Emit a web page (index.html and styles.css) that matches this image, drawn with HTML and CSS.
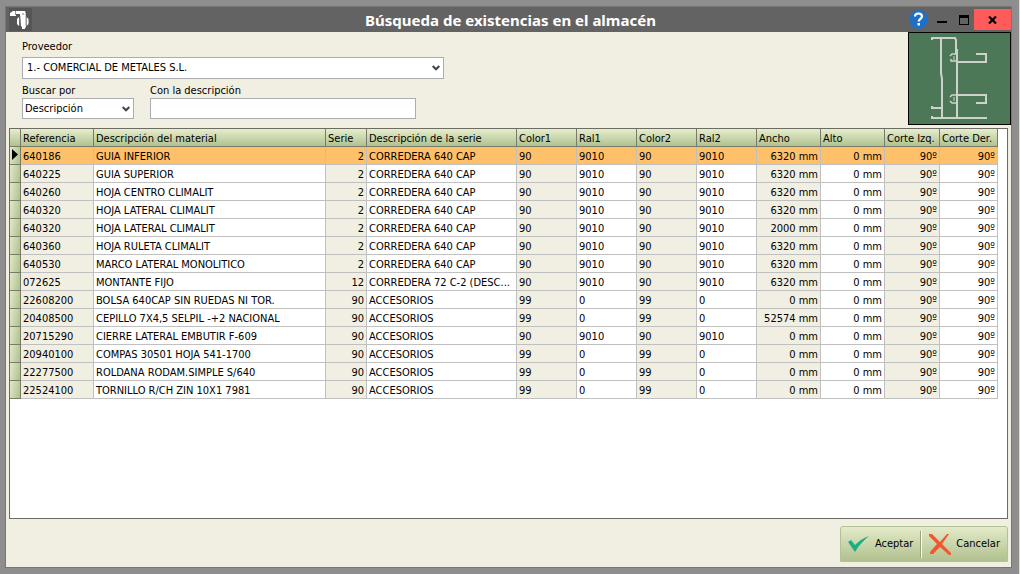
FILE: index.html
```
<!DOCTYPE html>
<html lang="es">
<head>
<meta charset="utf-8">
<title>Búsqueda de existencias en el almacén</title>
<link rel="stylesheet" href="styles.css">
</head>
<body>
<main class="window">
  <header class="titlebar">
    <svg class="logo" width="23" height="23" viewBox="0 0 23 23" aria-hidden="true">
      <rect width="23" height="23" fill="#555"/>
      <path d="M1 7V5l3-2h12l1 3H7v2H1z" fill="#fff"/>
      <path d="M11 6V3h3l2 2 1 3v11l-1 1v1h-3v-2l-1-1z" fill="#fff"/>
      <path d="M10 9l-2 2v5l2 2zM17.500 9l2 2v5l-2 2z" fill="#fff"/>
      <path d="M6.500 3v4M10.700 8v10M17 8v10" stroke="#777" stroke-width=".8" fill="none"/>
      <circle cx="14" cy="6" r=".7" fill="#555"/>
    </svg>
    <h1 class="title">Búsqueda de existencias en el almacén</h1>
    <div class="controls">
      <button class="control help" type="button" aria-label="Ayuda">
        <svg width="19" height="19" viewBox="0 0 19 19"><circle cx="9.500" cy="9.500" r="9.500" fill="#1f6fc4"/><path d="M6 6.500C6 4.500 7.500 3.500 9.500 3.500s3.500 1 3.500 3-3.300 2.700-3.300 5" fill="none" stroke="#fff" stroke-width="2.200"/><rect x="8.500" y="13" width="2.500" height="2.500" fill="#fff"/></svg>
      </button>
      <button class="control" type="button" aria-label="Minimizar">
        <svg width="10" height="8" viewBox="0 0 10 8"><path d="M0 5h10v2H0z"/></svg>
      </button>
      <button class="control" type="button" aria-label="Maximizar">
        <svg width="10" height="10" viewBox="0 0 10 10"><path d="M0 0h10v10H0zM1 3v6h8V3z" fill-rule="evenodd"/></svg>
      </button>
      <button class="control close" type="button" aria-label="Cerrar">
        <svg width="9" height="8" viewBox="0 0 9 8"><path d="M1 0.500l7 7M8 .5l-7 7" stroke="#000" stroke-width="2.200"/></svg>
      </button>
    </div>
  </header>

  <section class="search">
    <form class="fields">
      <div class="field provider">
        <label for="proveedor">Proveedor</label>
        <div class="picker">
          <select id="proveedor" class="box wide"><option>1.- COMERCIAL DE METALES S.L.</option></select>
          <svg class="chevron" width="8" height="6" viewBox="0 0 8 6"><path d="M.7 1L4 4.300 7.300 1" fill="none" stroke="#444" stroke-width="2"/></svg>
        </div>
      </div>
      <div class="filters">
        <div class="field by">
          <label for="buscar">Buscar por</label>
          <div class="picker">
            <select id="buscar" class="box"><option>Descripción</option></select>
            <svg class="chevron" width="8" height="6" viewBox="0 0 8 6"><path d="M.7 1L4 4.300 7.300 1" fill="none" stroke="#444" stroke-width="2"/></svg>
          </div>
        </div>
        <div class="field text">
          <label for="descripcion">Con la descripción</label>
          <input id="descripcion" class="box" type="text">
        </div>
      </div>
    </form>
    <svg class="profile" width="103" height="93" viewBox="0 0 103 93" role="img" aria-label="Perfil">
      <rect x=".5" y=".5" width="102" height="92" fill="#4d7858" stroke="#000"/>
      <g fill="none" stroke="#cdd3ca" stroke-width="2">
        <path d="M24 8V6h23l1 2v14M33 7v34l1 6v39M49 17v69M24 74v2h10M24 84v2h55"/>
        <path d="M49 30h29V22H68M49 63h29v8H68"/>
        <path d="M48 22h-4l-2 2M43 27v2h5M48 63h-4l-2 2M42 69l2 2h4" stroke-width="1.500"/>
        <path d="M46 24v4M46 65v4" stroke-width="1"/>
      </g>
    </svg>
  </section>

  <section class="grid">
    <table class="stock">
      <colgroup><col class="c-mark"><col class="c-ref"><col class="c-mat"><col class="c-serie"><col class="c-desc"><col class="c-color"><col class="c-color"><col class="c-color"><col class="c-color"><col class="c-size"><col class="c-size"><col class="c-izq"><col class="c-der"></colgroup>
      <thead><tr><th></th><th>Referencia</th><th>Descripción del material</th><th>Serie</th><th>Descripción de la serie</th><th>Color1</th><th>Ral1</th><th>Color2</th><th>Ral2</th><th>Ancho</th><th>Alto</th><th>Corte Izq.</th><th>Corte Der.</th></tr></thead>
      <tbody>
        <tr class="selected"><th><svg class="marker" width="6" height="11" viewBox="0 0 6 11"><path d="M0 0l6 5.500L0 11z"/></svg></th><td>640186</td><td>GUIA INFERIOR</td><td>2</td><td>CORREDERA 640 CAP</td><td>90</td><td>9010</td><td>90</td><td>9010</td><td>6320 mm</td><td>0 mm</td><td>90º</td><td>90º</td></tr>
        <tr><th></th><td>640225</td><td>GUIA SUPERIOR</td><td>2</td><td>CORREDERA 640 CAP</td><td>90</td><td>9010</td><td>90</td><td>9010</td><td>6320 mm</td><td>0 mm</td><td>90º</td><td>90º</td></tr>
        <tr><th></th><td>640260</td><td>HOJA CENTRO CLIMALIT</td><td>2</td><td>CORREDERA 640 CAP</td><td>90</td><td>9010</td><td>90</td><td>9010</td><td>6320 mm</td><td>0 mm</td><td>90º</td><td>90º</td></tr>
        <tr><th></th><td>640320</td><td>HOJA LATERAL CLIMALIT</td><td>2</td><td>CORREDERA 640 CAP</td><td>90</td><td>9010</td><td>90</td><td>9010</td><td>6320 mm</td><td>0 mm</td><td>90º</td><td>90º</td></tr>
        <tr><th></th><td>640320</td><td>HOJA LATERAL CLIMALIT</td><td>2</td><td>CORREDERA 640 CAP</td><td>90</td><td>9010</td><td>90</td><td>9010</td><td>2000 mm</td><td>0 mm</td><td>90º</td><td>90º</td></tr>
        <tr><th></th><td>640360</td><td>HOJA RULETA CLIMALIT</td><td>2</td><td>CORREDERA 640 CAP</td><td>90</td><td>9010</td><td>90</td><td>9010</td><td>6320 mm</td><td>0 mm</td><td>90º</td><td>90º</td></tr>
        <tr><th></th><td>640530</td><td>MARCO LATERAL MONOLITICO</td><td>2</td><td>CORREDERA 640 CAP</td><td>90</td><td>9010</td><td>90</td><td>9010</td><td>6320 mm</td><td>0 mm</td><td>90º</td><td>90º</td></tr>
        <tr><th></th><td>072625</td><td>MONTANTE FIJO</td><td>12</td><td>CORREDERA 72 C-2 (DESC...</td><td>90</td><td>9010</td><td>90</td><td>9010</td><td>6320 mm</td><td>0 mm</td><td>90º</td><td>90º</td></tr>
        <tr><th></th><td>22608200</td><td>BOLSA 640CAP SIN RUEDAS NI TOR.</td><td>90</td><td>ACCESORIOS</td><td>99</td><td>0</td><td>99</td><td>0</td><td>0 mm</td><td>0 mm</td><td>90º</td><td>90º</td></tr>
        <tr><th></th><td>20408500</td><td>CEPILLO 7X4,5 SELPIL -+2 NACIONAL</td><td>90</td><td>ACCESORIOS</td><td>99</td><td>0</td><td>99</td><td>0</td><td>52574 mm</td><td>0 mm</td><td>90º</td><td>90º</td></tr>
        <tr><th></th><td>20715290</td><td>CIERRE LATERAL EMBUTIR F-609</td><td>90</td><td>ACCESORIOS</td><td>90</td><td>9010</td><td>90</td><td>9010</td><td>0 mm</td><td>0 mm</td><td>90º</td><td>90º</td></tr>
        <tr><th></th><td>20940100</td><td>COMPAS 30501 HOJA 541-1700</td><td>90</td><td>ACCESORIOS</td><td>99</td><td>0</td><td>99</td><td>0</td><td>0 mm</td><td>0 mm</td><td>90º</td><td>90º</td></tr>
        <tr><th></th><td>22277500</td><td>ROLDANA RODAM.SIMPLE S/640</td><td>90</td><td>ACCESORIOS</td><td>99</td><td>0</td><td>99</td><td>0</td><td>0 mm</td><td>0 mm</td><td>90º</td><td>90º</td></tr>
        <tr><th></th><td>22524100</td><td>TORNILLO R/CH ZIN 10X1 7981</td><td>90</td><td>ACCESORIOS</td><td>99</td><td>0</td><td>99</td><td>0</td><td>0 mm</td><td>0 mm</td><td>90º</td><td>90º</td></tr>
      </tbody>
    </table>
  </section>

  <footer class="actions">
    <div class="toolbar">
      <button class="action" type="button">
        <svg width="22" height="16" viewBox="0 0 22 16"><path d="M0 6l3-2 4 5C11 5 15 2 21 0 16 4 11 9 7 16z" fill="#1fae84"/></svg>
        Aceptar
      </button>
      <span class="divider"></span>
      <button class="action" type="button">
        <svg width="22" height="21" viewBox="0 0 22 21"><path d="M0 0h3l8 8 7-8h2l-7 10 9 9v2h-2l-9-8-7 7H1v-2l7-8-8-8z" fill="#f4562f"/></svg>
        Cancelar
      </button>
    </div>
  </footer>
</main>
</body>
</html>
```
FILE: styles.css
```
* { box-sizing: border-box; }

body {
  margin: 0;
  min-height: 100vh;
  display: flex;
  padding: 6px 7px 6px 5px;
  border-right: 1px solid #dcdccb;
  background: #8e8e8e;
  color: #000;
  font: 11px/14px Tahoma, "DejaVu Sans Condensed", "DejaVu Sans", sans-serif;
}

button, select, input { font: inherit; color: inherit; }

.window {
  flex: 1;
  min-width: 0;
  display: flex;
  flex-direction: column;
  border: 1px solid #777770;
  background: #f1efe2;
}

.titlebar {
  display: flex;
  align-items: center;
  height: 25px;
  padding-left: 3px;
  background: #636363;
}

.logo { flex: none; }

.title {
  flex: 1;
  margin: 0;
  padding-left: 80px;
  color: #fff;
  font-family: "Noto Sans", "Open Sans", sans-serif;
  font-size: 15px;
  line-height: 24px;
  text-align: center;
}

.controls {
  display: flex;
  align-items: center;
  gap: 12px;
}

.control {
  display: flex;
  align-items: center;
  justify-content: center;
  padding: 0;
  border: 0;
  background: none;
}

.help { margin-right: -3px; }

.close {
  width: 37px;
  height: 21px;
  margin-left: -7px;
  background: #ff5b5b;
}

.search {
  display: flex;
  justify-content: space-between;
  align-items: flex-start;
}

.fields {
  flex: 1;
  padding: 8px 16px 0;
}

.field {
  display: flex;
  flex-direction: column;
}

.provider {
  max-width: 422px;
  gap: 3px;
}

.filters {
  display: flex;
  gap: 16px;
  max-width: 394px;
  margin-top: 5px;
}

.by { width: 112px; }

.text { flex: 1; }

.picker {
  position: relative;
  display: flex;
}

.box {
  appearance: none;
  width: 100%;
  height: 21px;
  margin: 0;
  padding: 0 2px;
  border: 1px solid #abadb3;
  border-radius: 0;
  background: #fff;
}

.wide {
  height: 22px;
  padding: 0 4px;
}

.chevron {
  position: absolute;
  right: 4px;
  top: 8px;
  pointer-events: none;
}

.profile {
  flex: none;
  display: block;
}

.grid {
  flex: 1;
  margin: 3px 3px 0;
  border: 1px solid #6c6c64;
  background: #fff;
}

.stock {
  width: 988px;
  border-collapse: separate;
  border-spacing: 0;
  table-layout: fixed;
}

.c-mark { width: 11px; }
.c-ref { width: 73px; }
.c-mat { width: 232px; }
.c-serie { width: 41px; }
.c-desc { width: 150px; }
.c-color { width: 60px; }
.c-size { width: 64px; }
.c-izq { width: 55px; }
.c-der { width: 58px; }

.stock th,
.stock td {
  height: 18px;
  padding: 3px 2px 0;
  overflow: hidden;
  border: solid #c0c0c0;
  border-width: 0 1px 1px 0;
  font-weight: normal;
  text-align: left;
  white-space: nowrap;
}

.stock th {
  border-color: #777b68;
  background: linear-gradient(#e6edcc, #b0c290);
}

.stock tbody th {
  padding: 0 2px 3px;
  background: linear-gradient(100deg, #e2eac8, #aec08e);
}

.stock td:nth-child(even) { background: #f1efe2; }

.stock td:nth-child(4),
.stock td:nth-child(n+10) { text-align: right; }

.stock .selected td:nth-child(n) { background: #ffc06a; }

.marker { display: block; }

.actions {
  display: flex;
  justify-content: flex-end;
  padding: 7px 3px 5px;
}

.toolbar {
  display: flex;
  align-items: center;
  height: 36px;
  border: 1px solid #b3c293;
  border-radius: 3px 3px 0 0;
  background: linear-gradient(#e3eac8, #b0c18e);
}

.action {
  display: flex;
  align-items: center;
  gap: 5px;
  height: 34px;
  padding: 0 7px;
  border: 0;
  background: none;
}

.divider {
  width: 2px;
  height: 27px;
  border-left: 1px solid #98a47e;
  background: #fff;
}
```
